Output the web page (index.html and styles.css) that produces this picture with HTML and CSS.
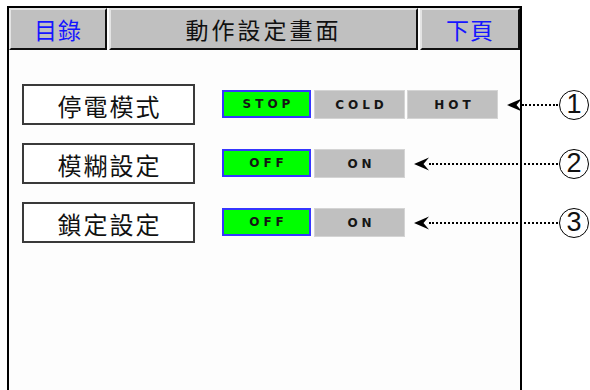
FILE: index.html
```html
<!DOCTYPE html>
<html lang="zh-Hant">
<head>
    <meta charset="UTF-8">
    <title>動作設定畫面</title>
    <link rel="stylesheet" href="styles.css">
</head>
<body>

<div class="screen">
    <!-- Top bar -->
    <div class="header">
        <div class="hbtn nav">目錄</div>
        <div class="hbtn title">動作設定畫面</div>
        <div class="hbtn nav">下頁</div>
    </div>

    <!-- Settings -->
    <div class="rows">
        <div class="row">
            <div class="label">停電模式</div>
            <div class="options">
                <div class="opt on">STOP</div>
                <div class="opt">COLD</div>
                <div class="opt">HOT</div>
            </div>
            <div class="callout">
                <svg class="arrowhead" width="15" height="14" viewBox="0 0 15 14"><path d="M0 7 L15 0.5 L9.5 7 L15 13.5 Z"/></svg>
                <span class="dots"></span>
                <span class="num">1</span>
            </div>
        </div>

        <div class="row">
            <div class="label">模糊設定</div>
            <div class="options">
                <div class="opt on">OFF</div>
                <div class="opt">ON</div>
            </div>
            <div class="callout">
                <svg class="arrowhead" width="15" height="14" viewBox="0 0 15 14"><path d="M0 7 L15 0.5 L9.5 7 L15 13.5 Z"/></svg>
                <span class="dots"></span>
                <span class="num">2</span>
            </div>
        </div>

        <div class="row">
            <div class="label">鎖定設定</div>
            <div class="options">
                <div class="opt on">OFF</div>
                <div class="opt">ON</div>
            </div>
            <div class="callout">
                <svg class="arrowhead" width="15" height="14" viewBox="0 0 15 14"><path d="M0 7 L15 0.5 L9.5 7 L15 13.5 Z"/></svg>
                <span class="dots"></span>
                <span class="num">3</span>
            </div>
        </div>
    </div>
</div>

</body>
</html>
```

FILE: styles.css
```css
body {
    margin: 0;
    background: #fff;
    overflow: hidden;
    font-family: "Noto Sans CJK TC", "Noto Sans", sans-serif;
}
.screen {
    margin: 6px 0 0 7px;
    width: 511px;
    height: 390px;
    border: 2px solid #000;
    border-bottom: none;
    background: #fdfdfd;
}
.header {
    display: flex;
    gap: 2px;
    height: 42px;
}
.hbtn {
    box-sizing: border-box;
    display: flex;
    align-items: center;
    justify-content: center;
    background: #c0c0c0;
    border: 2px solid;
    border-color: #e4e4e4 #101010 #101010 #e4e4e4;
    font-size: 23px;
    color: #111;
}
.hbtn.nav {
    width: 98px;
    color: #1515ff;
    letter-spacing: 1px;
}
.hbtn.title {
    width: 309px;
    letter-spacing: 3px;
}
.hbtn.nav:last-child {
    flex: 1;
}
.rows {
    display: flex;
    flex-direction: column;
    gap: 18px;
    padding: 34px 0 0 13px;
}
.row {
    display: flex;
    align-items: center;
    margin-right: -71px;
}
.label {
    box-sizing: border-box;
    width: 173px;
    height: 41px;
    border: 2px solid #3a3a3a;
    background: #fff;
    display: flex;
    align-items: center;
    justify-content: center;
    padding: 1px 0 0 2px;
    font-size: 24px;
    color: #111;
    letter-spacing: 2px;
}
.options {
    display: flex;
    gap: 2px;
    margin-left: 27px;
}
.opt {
    box-sizing: border-box;
    width: 91px;
    height: 29px;
    display: flex;
    align-items: center;
    justify-content: center;
    padding-left: 4px;
    background: #c0c0c0;
    border: 1px solid #d4d4d4;
    font-family: "DejaVu Sans", sans-serif;
    font-weight: bold;
    font-size: 12px;
    letter-spacing: 4px;
    color: #151515;
}
.opt.on {
    width: 89px;
    height: 28px;
    margin-right: 1px;
    background: #00ff00;
    border: 2px solid #3535ff;
}
.callout {
    flex: 1;
    display: flex;
    align-items: center;
    margin: 0 2px 0 9px;
}
.arrowhead {
    display: block;
    fill: #000;
}
.dots {
    flex: 1;
    height: 0;
    border-top: 2px dotted #000;
    margin-right: 1px;
}
.num {
    box-sizing: border-box;
    width: 30px;
    height: 30px;
    border: 1.5px solid #000;
    border-radius: 50%;
    display: flex;
    align-items: center;
    justify-content: center;
    font-family: "Liberation Sans", sans-serif;
    font-size: 27px;
    color: #111;
    background: #fff;
}
```
